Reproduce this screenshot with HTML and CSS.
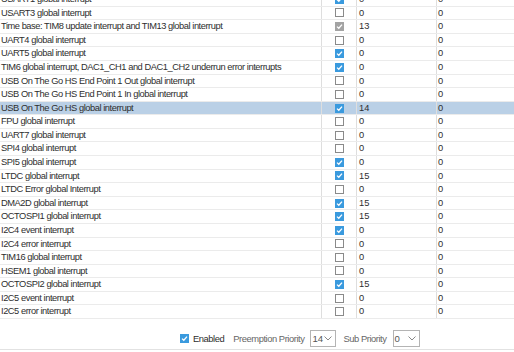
FILE: index.html
```html
<!DOCTYPE html>
<html>
<head>
  <title>NVIC</title>
  <link rel="stylesheet" href="styles.css">
</head>
<body>
  <div class="grid-wrap">
    <div class="grid" id="grid"></div>
  </div>

  <div class="footer">
    <span class="box on"></span>
    <span class="lbl">Enabled</span>
    <span class="lbl muted lbl-pre">Preemption Priority</span>
    <span class="sel sel-pre">14<svg viewBox="0 0 8 5"><polyline points="0.5,0.5 4,4 7.5,0.5"/></svg></span>
    <span class="lbl muted lbl-sub">Sub Priority</span>
    <span class="sel sel-sub">0<svg viewBox="0 0 8 5"><polyline points="0.5,0.5 4,4 7.5,0.5"/></svg></span>
  </div>

  <script>
    // nome, estado (1 = ligado, 0 = desligado, 2 = cinza), preempcao
    const rows = [
      ['USART1 global interrupt', 1, 0],
      ['USART3 global interrupt', 0, 0],
      ['Time base: TIM8 update interrupt and TIM13 global interrupt', 2, 13],
      ['UART4 global interrupt', 0, 0],
      ['UART5 global interrupt', 1, 0],
      ['TIM6 global interrupt, DAC1_CH1 and DAC1_CH2 underrun error interrupts', 1, 0],
      ['USB On The Go HS End Point 1 Out global interrupt', 0, 0],
      ['USB On The Go HS End Point 1 In global interrupt', 0, 0],
      ['USB On The Go HS global interrupt', 1, 14],
      ['FPU global interrupt', 0, 0],
      ['UART7 global interrupt', 0, 0],
      ['SPI4 global interrupt', 0, 0],
      ['SPI5 global interrupt', 1, 0],
      ['LTDC global interrupt', 1, 15],
      ['LTDC Error global Interrupt', 0, 0],
      ['DMA2D global interrupt', 1, 15],
      ['OCTOSPI1 global interrupt', 1, 15],
      ['I2C4 event interrupt', 1, 0],
      ['I2C4 error interrupt', 0, 0],
      ['TIM16 global interrupt', 0, 0],
      ['HSEM1 global interrupt', 0, 0],
      ['OCTOSPI2 global interrupt', 1, 15],
      ['I2C5 event interrupt', 0, 0],
      ['I2C5 error interrupt', 0, 0]
    ];

    const grid = document.getElementById('grid');

    rows.forEach(function(r, i) {
      const row = document.createElement('div');
      row.className = 'row' + (i === 8 ? ' selected' : '');
      const state = r[1] === 1 ? ' on' : (r[1] === 2 ? ' grey' : '');
      row.innerHTML =
        '<div class="cell name">' + r[0] + '</div>' +
        '<div class="cell chk"><span class="box' + state + '"></span></div>' +
        '<div class="cell num">' + r[2] + '</div>' +
        '<div class="cell num last">0</div>';
      grid.appendChild(row);
    });
  </script>
</body>
</html>
```

FILE: styles.css
```css
/* Tabela de interrupcoes */

body {
  margin: 0;
  background-color: #fff;
  font-family: "Liberation Sans", Arial, sans-serif;
  font-size: 9.3px;
  letter-spacing: -0.45px;
  color: #2e2e2e;
  width: 514px;
  height: 352px;
  overflow: hidden;
}

.grid-wrap {
  height: 319px;
  overflow: hidden;
}

.grid {
  margin-top: -6.88px;
}

.row {
  display: grid;
  grid-template-columns: 322px 35px 80px 1fr;
  height: 13.58px;
  box-sizing: border-box;
  border-bottom: 1px solid #ebebeb;
  line-height: 12.8px;
}

.row.selected {
  background-color: #bad0e6;
}

.cell {
  white-space: nowrap;
  overflow: hidden;
  border-right: 1px solid #dedede;
}

.cell.last {
  border-right: none;
}

.name {
  padding-left: 1px;
}

.num {
  padding-left: 2px;
  letter-spacing: 0;
}

.num.last {
  padding-left: 1px;
}

.chk {
  display: flex;
  align-items: center;
  padding-left: 13px;
}

.box {
  display: inline-block;
  width: 9px;
  height: 9px;
  box-sizing: border-box;
  border: 1px solid #8a8a8a;
  background-color: #fff;
}

.box.on,
.box.grey {
  border: none;
  background-color: #3a9ade;
  background-image: url("data:image/svg+xml;utf8,<svg xmlns='http://www.w3.org/2000/svg' viewBox='0 0 9 9'><polyline points='2,4.6 3.8,6.3 7,2.6' fill='none' stroke='white' stroke-width='1.3'/></svg>");
}

.box.grey {
  background-color: #a3a3a3;
}

.footer {
  height: 31px;
  box-sizing: border-box;
  border-bottom: 1px solid #e2e2e2;
  display: flex;
  align-items: center;
  padding-left: 180px;
  padding-top: 9px;
}

.footer .lbl {
  margin-left: 4px;
  font-size: 9.4px;
}

.footer .lbl.muted {
  color: #666;
}

.footer .lbl-pre {
  margin-left: 9px;
}

.footer .lbl-sub {
  margin-left: 7px;
}

.sel {
  display: inline-flex;
  align-items: center;
  justify-content: space-between;
  height: 17px;
  box-sizing: border-box;
  border: 1px solid #b4b4b4;
  padding: 0 3px 0 1px;
  font-size: 9.6px;
  letter-spacing: 0;
  color: #555;
}

.sel-pre {
  width: 26px;
  margin-left: 6px;
}

.sel-sub {
  width: 27px;
  margin-left: 6px;
}

.sel svg {
  width: 8px;
  height: 5px;
  fill: none;
  stroke: #888;
  stroke-width: 1;
}
```
